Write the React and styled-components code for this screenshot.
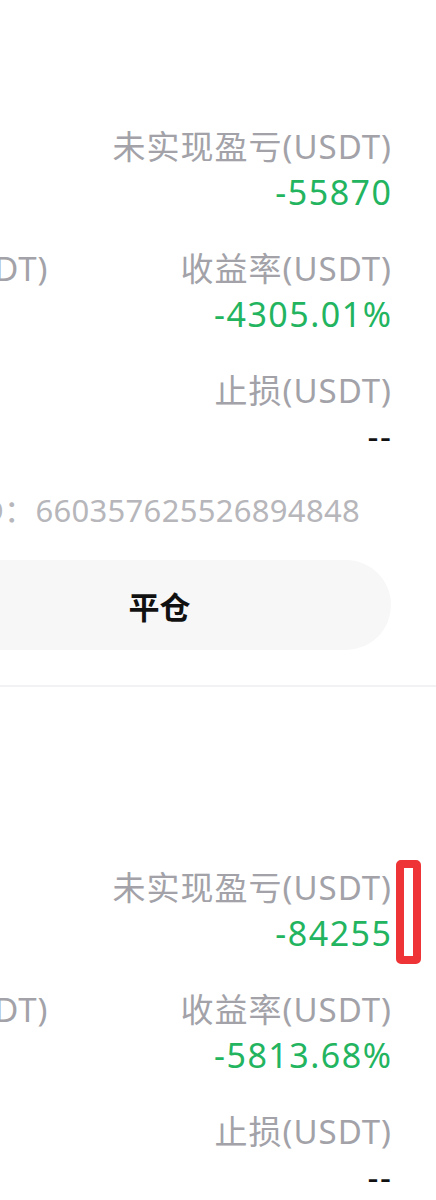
import React from "react";
import styled, { createGlobalStyle } from "styled-components";

const GlobalStyle = createGlobalStyle`
  html, body {
    margin: 0;
    padding: 0;
    background: #ffffff;
    overflow-x: hidden;
  }
  body {
    font-family: "Noto Sans", "Noto Sans CJK SC", sans-serif;
    color: #111111;
  }
`;

const positions = [
  {
    id: "660357625526894848",
    side: "多",
    symbol: "BTCUSDT",
    stats: [
      { label: "开仓价格", value: "64210.5" },
      { label: "标记价格", value: "63102.8" },
      { label: "未实现盈亏(USDT)", value: "-55870", tone: "down" },
      { label: "持仓数量", value: "50.42" },
      { label: "保证金(USDT)", value: "1297.83" },
      { label: "收益率(USDT)", value: "-4305.01%", tone: "down" },
      { label: "强平价格", value: "--" },
      { label: "止盈", value: "--" },
      { label: "止损(USDT)", value: "--" },
    ],
  },
  {
    id: "660357625526894851",
    side: "多",
    symbol: "ETHUSDT",
    stats: [
      { label: "开仓价格", value: "3421.06" },
      { label: "标记价格", value: "3388.15" },
      { label: "未实现盈亏(USDT)", value: "-84255", tone: "down" },
      { label: "持仓数量", value: "2560" },
      { label: "保证金(USDT)", value: "1449.20" },
      { label: "收益率(USDT)", value: "-5813.68%", tone: "down" },
      { label: "强平价格", value: "--" },
      { label: "止盈", value: "--" },
      { label: "止损(USDT)", value: "--" },
    ],
    marked: true,
  },
];

const App = () => {
  return (
    <>
      <GlobalStyle />
      <Viewport>
        <Sheet>
          {positions.map((p) => (
            <Card key={p.id}>
              <Header>
                <Symbol>{p.symbol} 永续</Symbol>
                <SideTag>{p.side}</SideTag>
              </Header>
              <StatGrid>
                {p.stats.map((s, i) => (
                  <Stat key={s.label + i} $align={i % 3 === 2 ? "right" : "left"}>
                    <Label>{s.label}</Label>
                    <Value $tone={s.tone}>{s.value}</Value>
                  </Stat>
                ))}
              </StatGrid>
              <OrderId>仓位ID：{p.id}</OrderId>
              <Actions>
                <ActionButton>止盈止损</ActionButton>
                <ActionButton $main>平仓</ActionButton>
              </Actions>
              {p.marked && <Marker />}
            </Card>
          ))}
        </Sheet>
      </Viewport>
    </>
  );
};

const Viewport = styled.div`
  width: 436px;
  height: 1200px;
  overflow: hidden;
`;

const Sheet = styled.div`
  width: 1036px;
  margin: -54px 0 0 -600px;
`;

const Card = styled.section`
  position: relative;
  padding: 40px 45px 35px 0;
  border-bottom: 2px solid #f2f2f4;
`;

const Header = styled.div`
  display: flex;
  align-items: center;
  gap: 16px;
  height: 100px;
  margin-bottom: 39px;
`;

const Symbol = styled.div`
  font-size: 36px;
  font-weight: 700;
`;

const SideTag = styled.span`
  padding: 2px 10px;
  border-radius: 6px;
  background: #e8f7ee;
  color: #22b35e;
  font-size: 26px;
`;

const StatGrid = styled.div`
  display: grid;
  grid-template-columns: 1fr 209px 300px;
  column-gap: 45px;
  row-gap: 32px;
`;

const Stat = styled.div`
  display: flex;
  flex-direction: column;
  text-align: ${(p) => p.$align};
`;

const Label = styled.div`
  font-size: 33px;
  line-height: 44px;
  letter-spacing: 1px;
  margin-right: -1px;
  color: #a2a2a8;
  white-space: nowrap;
`;

const Value = styled.div`
  font-size: 34px;
  line-height: 46px;
  letter-spacing: 1.5px;
  margin-right: -1.5px;
  color: ${(p) => (p.$tone === "down" ? "#23b45f" : "#111111")};
  white-space: nowrap;
`;

const OrderId = styled.div`
  margin-top: 29px;
  padding-right: 31px;
  text-align: right;
  font-size: 31px;
  line-height: 44px;
  letter-spacing: 0.3px;
  color: #b6b6bb;
  white-space: nowrap;
`;

const Actions = styled.div`
  display: flex;
  gap: 24px;
  margin-top: 28px;
`;

const ActionButton = styled.button`
  flex: ${(p) => (p.$main ? "0 0 463px" : "1")};
  height: 90px;
  border: none;
  border-radius: 45px;
  background: #f7f7f8;
  font-family: inherit;
  font-size: 31px;
  font-weight: 700;
  color: #111111;
`;

const Marker = styled.div`
  position: absolute;
  top: 173px;
  right: 15px;
  width: 25px;
  height: 104px;
  box-sizing: border-box;
  border: 8px solid #ee3437;
  border-radius: 5px;
`;

export default App;
